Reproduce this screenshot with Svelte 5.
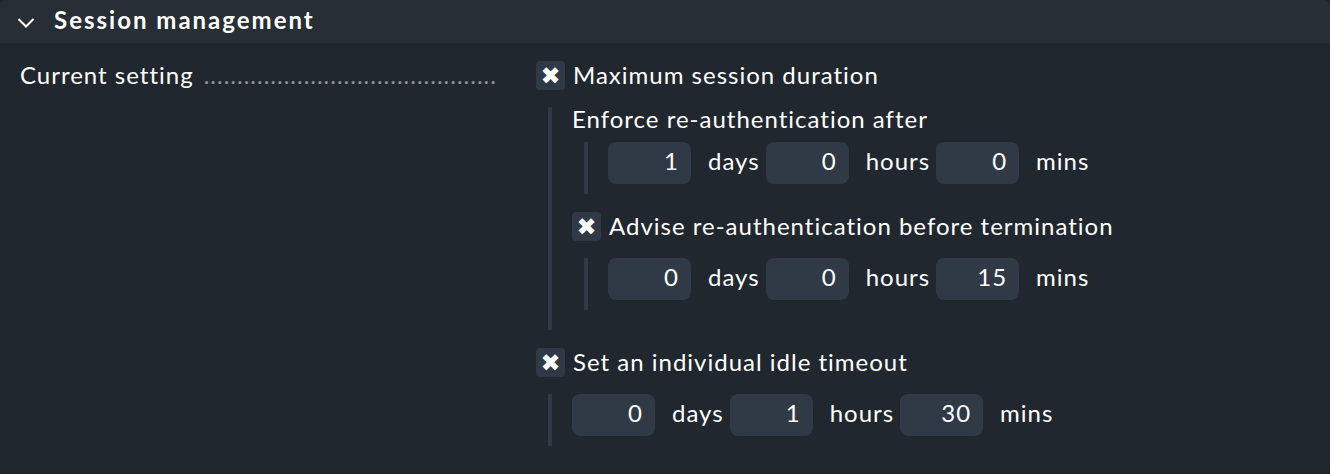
<script>
  let open = $state(true);
  let maxDuration = $state(true);
  let advise = $state(true);
  let idle = $state(true);

  const units = ['days', 'hours', 'mins'];
  let enforceAfter = $state(['1', '0', '0']);
  let adviseBefore = $state(['0', '0', '15']);
  let idleTimeout = $state(['0', '1', '30']);
</script>

{#snippet timespan(name, values)}
  <div class="nested timespan">
    {#each units as unit, i}
      <input
        class="number"
        id="{name}-{unit}"
        type="text"
        inputmode="numeric"
        bind:value={values[i]}
      />
      <label class="unit" for="{name}-{unit}">{unit}</label>
    {/each}
  </div>
{/snippet}

<section class="panel">
  <h2 class="header">
    <button class="toggle" type="button" aria-expanded={open} onclick={() => (open = !open)}>
      <svg class="chevron" class:closed={!open} viewBox="0 0 18 12" width="18" height="12" aria-hidden="true">
        <path d="M1.5 2 L9 9.5 L16.5 2" fill="none" stroke="currentColor" stroke-width="2" />
      </svg>
      <span>Session management</span>
    </button>
  </h2>

  {#if open}
    <div class="body">
      <div class="legend">
        <span>Current setting</span>
        <span class="dots" aria-hidden="true">{'.'.repeat(44)}</span>
      </div>

      <div class="settings">
        <div class="option">
          <label class="check"><input type="checkbox" bind:checked={maxDuration} /><span>Maximum session duration</span></label>
          {#if maxDuration}
            <div class="nested group">
              <div class="title">Enforce re-authentication after</div>
              {@render timespan('enforce', enforceAfter)}
              <div class="option inner">
                <label class="check"><input type="checkbox" bind:checked={advise} /><span>Advise re-authentication before termination</span></label>
                {#if advise}
                  {@render timespan('advise', adviseBefore)}
                {/if}
              </div>
            </div>
          {/if}
        </div>

        <div class="option">
          <label class="check"><input type="checkbox" bind:checked={idle} /><span>Set an individual idle timeout</span></label>
          {#if idle}
            {@render timespan('idle', idleTimeout)}
          {/if}
        </div>
      </div>
    </div>
  {/if}
</section>

<style>
  :global(body) {
    background: #1e242a;
  }

  .panel {
    background: #21272e;
    border-radius: 6px;
    overflow: hidden;
    color: #fff;
    font-family: Lato, "Liberation Sans", sans-serif;
    font-size: 24px;
    line-height: 27px;
    letter-spacing: 1px;
  }

  .header {
    margin: 0;
    background: #272e36;
    font-size: 24px;
  }

  .toggle {
    display: flex;
    align-items: center;
    gap: 19px;
    width: 100%;
    padding: 6px 17px 10px;
    border: 0;
    background: none;
    color: inherit;
    font: inherit;
    font-weight: 700;
    letter-spacing: 2px;
    text-align: left;
    cursor: pointer;
  }

  .chevron {
    margin-top: 7px;
  }

  .chevron.closed {
    transform: rotate(-90deg);
  }

  .body {
    display: grid;
    grid-template-columns: 476px 1fr;
    column-gap: 40px;
    padding: 18px 20px 28px;
  }

  .legend {
    display: flex;
    align-items: flex-start;
    gap: 10px;
    white-space: nowrap;
  }

  .dots {
    flex: 1;
    min-width: 0;
    overflow: hidden;
    color: #8f9397;
  }

  .settings {
    display: flex;
    flex-direction: column;
    gap: 18px;
  }

  .check {
    display: flex;
    align-items: flex-start;
    gap: 8px;
    width: fit-content;
    margin-bottom: 17px;
  }

  .check input {
    appearance: none;
    display: grid;
    justify-content: center;
    flex: none;
    width: 29px;
    height: 29px;
    margin: 0;
    border-radius: 4px;
    background: #303946;
  }

  .check input:checked::before {
    content: "✖";
    color: #fff;
    font: 24px/31px "DejaVu Sans", sans-serif;
    letter-spacing: 0;
  }

  .nested {
    margin-left: 12px;
    padding-left: 20px;
    border-left: 4px solid #303946;
  }

  .group {
    padding-bottom: 20px;
  }

  .title {
    padding-bottom: 12px;
    line-height: 23px;
  }

  .inner {
    margin-top: 18px;
  }

  .timespan {
    display: flex;
    padding-bottom: 10px;
  }

  .number {
    box-sizing: border-box;
    width: 83px;
    height: 42px;
    margin: 0;
    padding: 0 12px 5px;
    border: 0;
    border-radius: 8px;
    background: #303946;
    color: inherit;
    font: inherit;
    letter-spacing: inherit;
    text-align: right;
  }

  .unit {
    padding: 5px 6px 10px 17px;
  }
</style>
